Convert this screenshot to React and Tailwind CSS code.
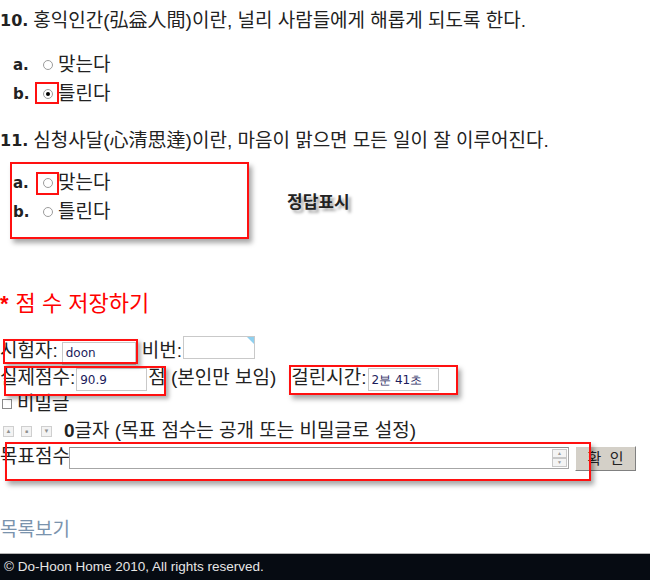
import React from 'react';

const Radio = ({ checked }) => (
  <span className="inline-flex w-[10px] h-[10px] rounded-full border border-[#9c9c9c] bg-white items-center justify-center shrink-0">
    {checked && <span className="w-[4px] h-[4px] rounded-full bg-black" />}
  </span>
);

const Option = ({ label, text, checked, className = '' }) => (
  <div className={`flex items-center h-[20px] pl-[13px] ${className}`}>
    <span className="w-[30px] font-['DejaVu_Sans',sans-serif] font-bold text-[15px] text-[#222]">{label}</span>
    <Radio checked={checked} />
    <span className="ml-[5px]">{text}</span>
  </div>
);

const Field = ({ value, w }) => (
  <span className={`inline-flex items-center h-[23px] border border-[#c9c9c9] bg-white pl-[3px] text-[12px] text-[#1c1c5c] font-['DejaVu_Sans',sans-serif] ${w}`}>
    {value}
  </span>
);

const Mark = ({ className }) => (
  <div className={`absolute border-2 border-[#ff1010] pointer-events-none ${className}`} />
);

const App = () => {
  return (
    <div className="relative w-[650px] h-[580px] overflow-hidden bg-white text-[19px] text-[#222] font-['Liberation_Sans','Noto_Sans_CJK_KR',sans-serif]">
      {/* question 10 */}
      <div className="flex items-center h-[22px] mt-[10px] whitespace-nowrap">
        <span className="font-bold font-['DejaVu_Sans',sans-serif] text-[16px] mr-[5px]">10.</span>
        홍익인간(弘益人間)이란, 널리 사람들에게 해롭게 되도록 한다.
      </div>
      <Option label="a." text="맞는다" className="mt-[23px]" />
      <Option label="b." text="틀린다" checked className="mt-[9px]" />

      {/* question 11 */}
      <div className="flex items-center h-[22px] mt-[26px] whitespace-nowrap">
        <span className="font-bold font-['DejaVu_Sans',sans-serif] text-[16px] mr-[5px]">11.</span>
        심청사달(心清思達)이란, 마음이 맑으면 모든 일이 잘 이루어진다.
      </div>
      <Option label="a." text="맞는다" className="mt-[21px]" />
      <Option label="b." text="틀린다" className="mt-[9px]" />

      {/* save score */}
      <div className="flex items-center h-[26px] mt-[68px] text-[22px] text-[#ff0000] whitespace-nowrap">
        <span className="font-bold mr-[7px]">*</span>점 수 저장하기
      </div>

      <div className="flex items-center h-[25px] mt-[23px] whitespace-nowrap">
        <span>시험자:</span>
        <span className="ml-[4px]"><Field value="doon" w="w-[74px]" /></span>
        <span className="ml-[6px]">비번:</span>
        <span className="relative ml-[1px]">
          <Field value="" w="w-[72px]" />
          <span className="absolute top-[1px] right-[1px] w-0 h-0 border-t-[7px] border-l-[7px] border-t-[#8fd0ef] border-l-transparent" />
        </span>
      </div>

      <div className="flex items-center h-[24px] mt-[2px] whitespace-nowrap">
        <span>실제점수:</span>
        <span className="ml-[1px]"><Field value="90.9" w="w-[71px]" /></span>
        <span className="ml-[1px]">점 (본인만 보임)</span>
        <span className="ml-[15px]">걸린시간:</span>
        <span className="ml-[1px]"><Field value="2분 41초" w="w-[71px]" /></span>
      </div>

      <div className="flex items-center h-[18px] mt-[5px] whitespace-nowrap">
        <span className="ml-[2px] w-[10px] h-[10px] border border-[#8a8a8a] bg-white" />
        <span className="ml-[5px]">비밀글</span>
      </div>

      <div className="flex items-center h-[20px] mt-[8px] whitespace-nowrap">
        <span className="ml-[3px] w-[11px] h-[11px] border border-[#cfcfcf] bg-[#f3f3f3] flex items-center justify-center text-[6px] text-[#8f8f8f] leading-none">▲</span>
        <span className="ml-[7px] w-[11px] h-[11px] border border-[#cfcfcf] bg-[#f3f3f3] flex items-center justify-center text-[5px] text-[#8f8f8f] leading-none">■</span>
        <span className="ml-[9px] w-[11px] h-[11px] border border-[#cfcfcf] bg-[#f3f3f3] flex items-center justify-center text-[6px] text-[#8f8f8f] leading-none">▼</span>
        <span className="ml-[12px] font-bold">0</span>
        <span>글자 (목표 점수는 공개 또는 비밀글로 설정)</span>
      </div>

      <div className="flex items-start h-[27px] mt-[4px] whitespace-nowrap">
        <span className="w-[69px] leading-[22px] mt-[1px]">목표점수</span>
        <div className="flex justify-end items-stretch mt-[2px] w-[500px] h-[22px] border border-[#a6a6a6] border-t-[#8c8c8c] bg-white">
          <div className="flex flex-col w-[15px] mr-[1px] my-[1px] bg-[#f0f0f0]">
            <span className="flex-1 border border-[#c8c8c8] bg-[#f4f4f4] flex items-center justify-center text-[5px] text-[#9a9a9a] leading-none">▲</span>
            <span className="flex-1 border border-[#c8c8c8] bg-[#f4f4f4] flex items-center justify-center text-[5px] text-[#9a9a9a] leading-none">▼</span>
          </div>
        </div>
        <button className="ml-[6px] mt-[1px] w-[61px] h-[25px] bg-[#d4d0c8] border border-t-white border-l-white border-b-[#808080] border-r-[#808080] text-[15px] text-[#222] leading-none">
          확&nbsp;&nbsp;인
        </button>
      </div>

      <div className="flex items-center h-[20px] mt-[48px] text-[#7a93ad] whitespace-nowrap">목록보기</div>

      <footer className="mt-[13px] h-[27px] border-t border-[#b5b5b5] bg-[#060b12] flex items-center pl-[4px] text-[13.5px] text-[#e6e6e6] font-['Liberation_Sans',sans-serif]">
        © Do-Hoon Home 2010, All rights reserved.
      </footer>

      {/* annotations */}
      <Mark className="left-[35px] top-[82px] w-[24px] h-[22px]" />
      <Mark className="left-[10px] top-[162px] w-[239px] h-[77px] shadow-[3px_4px_5px_rgba(0,0,0,0.35)]" />
      <Mark className="left-[36px] top-[172px] w-[23px] h-[23px]" />
      <Mark className="left-[3px] top-[339px] w-[135px] h-[25px] shadow-[3px_3px_4px_rgba(0,0,0,0.3)]" />
      <Mark className="left-[4px] top-[366px] w-[162px] h-[30px] shadow-[3px_3px_4px_rgba(0,0,0,0.3)]" />
      <Mark className="left-[289px] top-[365px] w-[169px] h-[30px] shadow-[3px_4px_5px_rgba(0,0,0,0.35)]" />
      <Mark className="left-[5px] top-[442px] w-[586px] h-[39px] shadow-[3px_4px_5px_rgba(0,0,0,0.35)]" />

      <div className="absolute left-[287px] top-[188px] text-[17px] font-bold text-[#222] [text-shadow:3px_3px_3px_rgba(0,0,0,0.35)] font-['Noto_Sans_CJK_KR',sans-serif]">
        정답표시
      </div>
    </div>
  );
};

export default App;
